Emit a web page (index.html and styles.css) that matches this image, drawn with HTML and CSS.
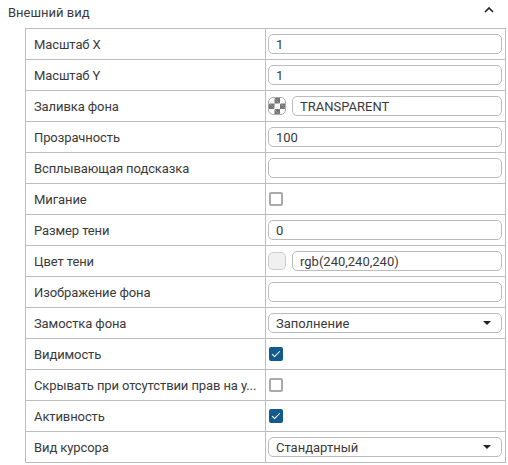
FILE: index.html
```html
<!DOCTYPE html>
<html lang="ru">
<head>
  <meta charset="UTF-8">
  <title>Внешний вид</title>
  <link rel="stylesheet" href="styles.css">
</head>
<body>
  <div class="section">
    <div class="section-head">
      <span>Внешний вид</span>
      <svg class="chevron" width="10" height="6" viewBox="0 0 10 6">
        <path d="M1 5 L5 1 L9 5" fill="none" stroke="#222" stroke-width="1.6"/>
      </svg>
    </div>

    <div class="props">
      <div class="label">Масштаб X</div>
      <div class="value"><div class="field">1</div></div>

      <div class="label">Масштаб Y</div>
      <div class="value"><div class="field">1</div></div>

      <div class="label">Заливка фона</div>
      <div class="value"><span class="swatch checker"></span><div class="field">TRANSPARENT</div></div>

      <div class="label">Прозрачность</div>
      <div class="value"><div class="field">100</div></div>

      <div class="label">Всплывающая подсказка</div>
      <div class="value"><div class="field"></div></div>

      <div class="label">Мигание</div>
      <div class="value"><span class="check"></span></div>

      <div class="label">Размер тени</div>
      <div class="value"><div class="field">0</div></div>

      <div class="label">Цвет тени</div>
      <div class="value"><span class="swatch shadow"></span><div class="field">rgb(240,240,240)</div></div>

      <div class="label">Изображение фона</div>
      <div class="value"><div class="field"></div></div>

      <div class="label">Замостка фона</div>
      <div class="value"><div class="field select">Заполнение<span class="caret"></span></div></div>

      <div class="label">Видимость</div>
      <div class="value"><span class="check on"></span></div>

      <div class="label">Скрывать при отсутствии прав на у...</div>
      <div class="value"><span class="check"></span></div>

      <div class="label">Активность</div>
      <div class="value"><span class="check on"></span></div>

      <div class="label">Вид курсора</div>
      <div class="value"><div class="field select">Стандартный<span class="caret"></span></div></div>
    </div>
  </div>
</body>
</html>
```

FILE: styles.css
```css
body {
  margin: 0;
  background: #fff;
  font-family: Roboto, "Liberation Sans", sans-serif;
  font-size: 13px;
  color: #3a3a3a;
}

.section {
  width: 508px;
}

.section-head {
  height: 28px;
  display: flex;
  align-items: center;
  justify-content: space-between;
  padding: 0 14px 0 8px;
  box-sizing: border-box;
}

.section-head span {
  margin-top: -4px;
}

.chevron {
  margin-top: -8px;
}

.props {
  margin-left: 25px;
  width: 481px;
  display: grid;
  grid-template-columns: 240px 1fr;
  border-top: 1px solid #bdbdbd;
  border-left: 1px solid #bdbdbd;
  box-sizing: border-box;
}

.label,
.value {
  height: 31px;
  box-sizing: border-box;
  border-right: 1px solid #bdbdbd;
  border-bottom: 1px solid #bdbdbd;
  display: flex;
  align-items: center;
}

.label {
  padding-left: 8px;
  white-space: nowrap;
  overflow: hidden;
  letter-spacing: -0.1px;
}

.value {
  padding: 0 3px 0 2px;
  gap: 6px;
}

.field {
  flex: 1;
  height: 20px;
  box-sizing: border-box;
  border: 1px solid #bbb;
  border-radius: 5px;
  padding: 0 7px;
  display: flex;
  align-items: center;
  background: #fff;
}

.select {
  justify-content: space-between;
  padding-right: 10px;
}

.caret {
  width: 0;
  height: 0;
  border-left: 4px solid transparent;
  border-right: 4px solid transparent;
  border-top: 4px solid #222;
}

.swatch {
  width: 18px;
  height: 18px;
  box-sizing: border-box;
  border-radius: 5px;
  flex: none;
}

/* 3x3 checkerboard for a transparent fill */
.checker {
  border: 1px solid #aaa;
  background-color: #fff;
  background-image:
    linear-gradient(45deg, #777 25%, transparent 25%, transparent 75%, #777 75%),
    linear-gradient(45deg, #777 25%, transparent 25%, transparent 75%, #777 75%);
  background-size: 11px 11px;
  background-position: 0 0, 5.5px 5.5px;
}

.shadow {
  border: 1px solid #ccc;
  background: #f0f0f0;
}

.check {
  width: 14px;
  height: 14px;
  box-sizing: border-box;
  border: 2px solid #aaa;
  border-radius: 2px;
  margin-left: 1px;
  position: relative;
}

.check.on {
  border: none;
  background: #145a8c;
}

.check.on::after {
  content: "";
  position: absolute;
  left: 5px;
  top: 2px;
  width: 3px;
  height: 7px;
  border-right: 1.5px solid #fff;
  border-bottom: 1.5px solid #fff;
  transform: rotate(45deg);
}
```
